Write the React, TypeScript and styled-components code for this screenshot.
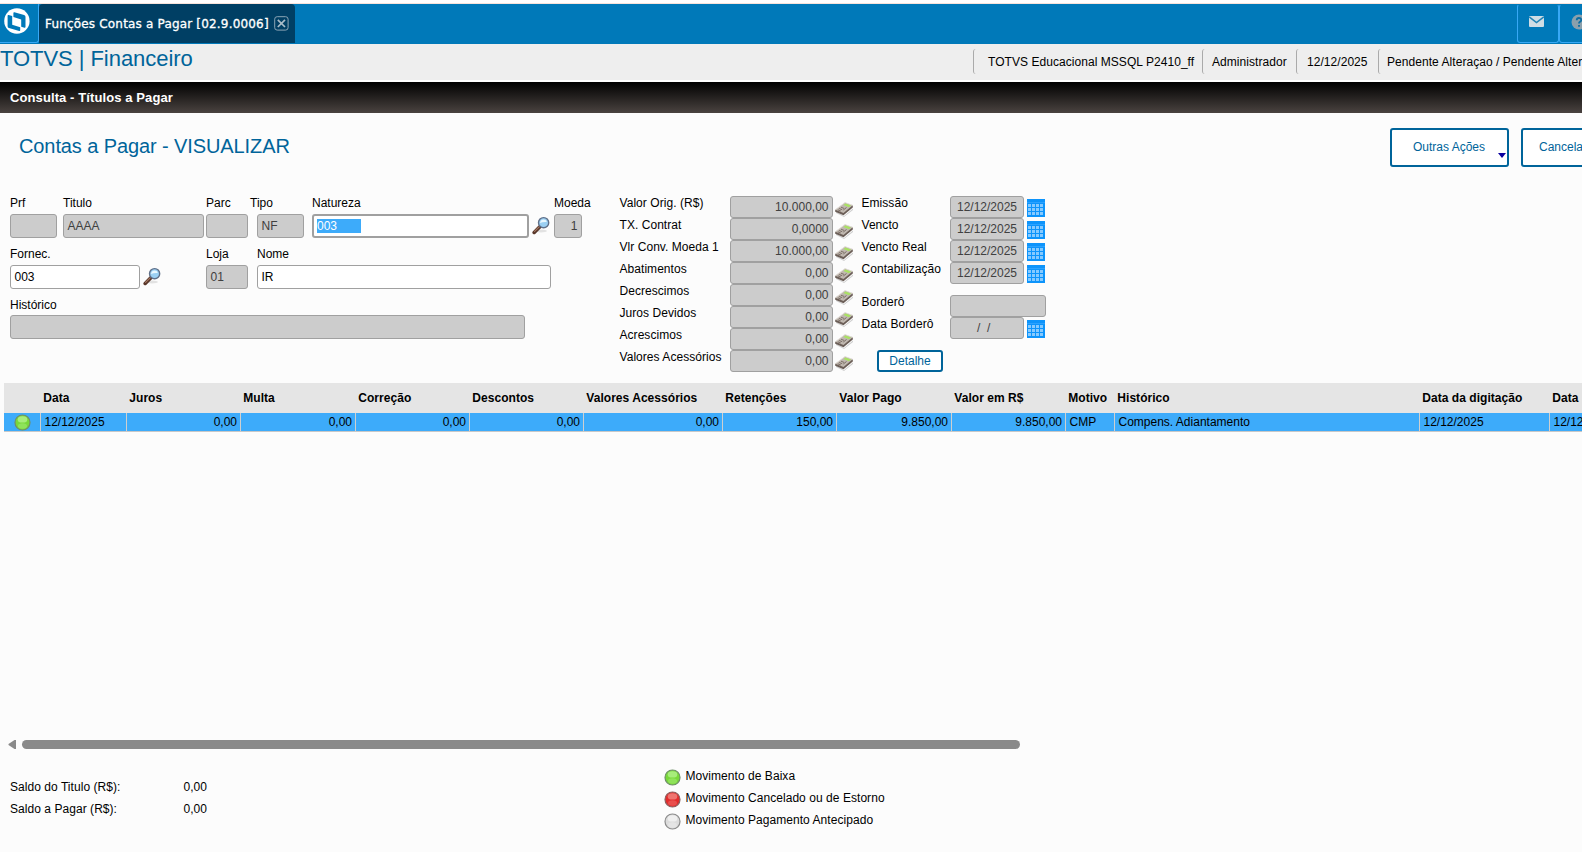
import React from "react";
import styled, { createGlobalStyle } from "styled-components";

const GlobalStyle = createGlobalStyle`
  * { box-sizing: border-box; }
  html, body { margin: 0; padding: 0; background: #fcfcfc; overflow: hidden; }
  body { font: 12px/14px "Liberation Sans", Arial, sans-serif; color: #000; }
`;

const blue = "#00649a";
const highlight = "#3dabfa";

const Screen = styled.div`
  width: 1582px;
  height: 852px;
  overflow: hidden;
  display: flex;
  flex-direction: column;
  background: #fcfcfc;
  white-space: nowrap;
`;

/* ---------- top bar ---------- */
const TopBar = styled.header`
  flex: none;
  height: 44px;
  display: flex;
  background: #0079b9;
  border-top: 3px solid #fffefe;
  box-shadow: inset 0 1px 0 #f6e3dc;
  padding-top: 1px;
`;
const LogoButton = styled.div`
  width: 39px;
  height: 39px;
  border-right: 1px solid #38a8f5;
  border-bottom: 1px solid #38a8f5;
  border-radius: 0 0 3px 0;
  padding: 4px 0 0 4px;
`;
const Tab = styled.div`
  width: 256px;
  height: 39px;
  background: #003f64;
  border-radius: 4px 4px 0 0;
  display: flex;
  align-items: center;
  padding-left: 6px;
  color: #fff;
  font: 12px/18px "DejaVu Sans", Verdana, sans-serif;
`;
const TabTitle = styled.span`
  width: 223px;
  margin-right: 6px;
  letter-spacing: 0.18px;
  -webkit-text-stroke: 0.3px #fff;
`;
const Spacer = styled.div`
  flex: 1;
`;
const BarButton = styled.div`
  flex: none;
  width: 42px;
  height: 39px;
  border: 1px solid #38a8f5;
  border-top-color: #0079b9;
  border-radius: 3px;
  padding: 9px 0 0 10px;
`;
const EdgeButton = styled(BarButton)`
  margin-right: -19px;
`;

/* ---------- module header ---------- */
const ModuleHeader = styled.div`
  flex: none;
  height: 38px;
  background: #eee;
  border-bottom: 2px solid #fff;
  display: flex;
  justify-content: space-between;
`;
const ModuleName = styled.h1`
  margin: 2px 0 0;
  font: 22px/25px "Liberation Sans", Arial, sans-serif;
  color: ${blue};
  letter-spacing: -0.05px;
`;
const Session = styled.div`
  display: flex;
  padding-top: 5px;
`;
const SessionItem = styled.div<{ $w: number; $pad: number }>`
  flex: none;
  width: ${(p) => p.$w}px;
  height: 25px;
  border-left: 1px solid #aaa;
  border-radius: 3px;
  padding: 6px 0 0 ${(p) => p.$pad}px;
  letter-spacing: 0.05px;
`;
const Caption = styled.div`
  flex: none;
  height: 31px;
  padding: 8px 0 0 10px;
  background: linear-gradient(#000, #4a4340);
  color: #fff;
  font: bold 13px/15px "Liberation Sans", Arial, sans-serif;
  letter-spacing: 0.1px;
`;

/* ---------- title and actions ---------- */
const TitleRow = styled.div`
  flex: none;
  height: 83px;
  padding: 15px 0 0 19px;
  display: flex;
`;
const Title = styled.h2`
  flex: none;
  width: 1371px;
  margin: 6px 0 0;
  font: 20px/24px "Liberation Sans", Arial, sans-serif;
  color: ${blue};
  letter-spacing: -0.1px;
`;
const ActionButton = styled.div<{ $w: number; $pad: number }>`
  flex: none;
  width: ${(p) => p.$w}px;
  height: 39px;
  margin-right: 12px;
  border: 2px solid ${blue};
  border-radius: 3px;
  padding: 10px 0 0 ${(p) => p.$pad}px;
  color: ${blue};
  background: #fff;
  display: flex;
`;
const Caret = styled.i`
  margin: 13px 0 0 12.5px;
  width: 0;
  height: 0;
  border: 4px solid transparent;
  border-top: 5px solid #0a00a0;
  border-bottom: 0;
`;

/* ---------- form ---------- */
const Form = styled.section`
  flex: none;
  height: 187px;
  display: flex;
  padding-left: 10px;
`;
const Fields = styled.div`
  width: 609px;
`;
const FieldRow = styled.div<{ $mb?: number }>`
  display: flex;
  align-items: flex-end;
  margin-bottom: ${(p) => p.$mb ?? 9}px;
`;
const Field = styled.div<{ $ml?: number }>`
  margin-left: ${(p) => p.$ml ?? 0}px;
`;
const Label = styled.div<{ $shift?: number; $gap?: number }>`
  margin: 0 -20px ${(p) => p.$gap ?? 4}px ${(p) => p.$shift ?? 0}px;
`;
const Box = styled.div<{
  $w: number;
  $h?: number;
  $enabled?: boolean;
  $focus?: boolean;
  $align?: string;
}>`
  flex: none;
  width: ${(p) => p.$w}px;
  height: ${(p) => p.$h ?? 24}px;
  display: flex;
  align-items: center;
  justify-content: ${(p) => p.$align ?? "flex-start"};
  padding: 0 ${(p) => (p.$focus ? 3 : 3.5)}px 1px;
  white-space: pre;
  border: ${(p) => (p.$focus ? 2 : 1)}px solid #a0a0a0;
  border-radius: 3px;
  background: ${(p) => (p.$enabled ? "#fff" : "#ccc")};
  color: ${(p) => (p.$enabled ? "#000" : "#404040")};
`;
const Selection = styled.span`
  width: 44px;
  background: ${highlight};
  color: #fff;
`;
const LensSlot = styled.div`
  height: 24px;
  width: 22px;
  padding: 2px 0 0 3px;
  margin-right: 3px;
`;
const Column = styled.div<{ $w: number }>`
  width: ${(p) => p.$w}px;
`;
const Line = styled.div<{ $mt?: number }>`
  height: 22px;
  display: flex;
  margin-top: ${(p) => p.$mt ?? 0}px;
`;
const LineLabel = styled.div<{ $w: number }>`
  flex: none;
  width: ${(p) => p.$w}px;
  padding-left: 0.5px;
  letter-spacing: 0.05px;
`;
const DetailButton = styled.div`
  width: 66px;
  height: 22px;
  margin: 11px 0 0 16px;
  border: 2px solid ${blue};
  border-radius: 3px;
  background: #fff;
  color: ${blue};
  text-align: center;
  line-height: 18px;
`;

/* ---------- grid ---------- */
const Table = styled.section`
  flex: none;
  height: 357px;
  margin-left: 4px;
  overflow: hidden;
`;
const gridColumns = "37px 86px 114px 115px 114px 114px 139px 114px 115px 114px 49px 305px 130px 100px";
const HeadRow = styled.div`
  display: grid;
  grid-template-columns: ${gridColumns};
  height: 30px;
  background: #e5e5e5;
  font-weight: bold;
`;
const HeadCell = styled.div`
  padding: 8px 0 0 2.3px;
  letter-spacing: 0.04px;
`;
const BodyRow = styled.div`
  display: grid;
  grid-template-columns: ${gridColumns};
  height: 19px;
  background: ${highlight};
  border-bottom: 1px solid #c8c8c8;
  overflow: hidden;
`;
const Cell = styled.div<{ $right?: boolean }>`
  height: 18px;
  border-right: 1px solid #cfcfcf;
  padding: 2px 3px 0 3.5px;
  text-align: ${(p) => (p.$right ? "right" : "left")};
`;
const DotCell = styled(Cell)`
  padding: 1px 0 0 10px;
`;
const ScrollBar = styled.div`
  flex: none;
  height: 9px;
  display: flex;
  padding-left: 8px;
`;
const Thumb = styled.div`
  width: 998px;
  height: 9px;
  margin-left: 6px;
  border-radius: 5px;
  background: #8a8a8a;
`;

/* ---------- footer ---------- */
const Footer = styled.footer`
  display: flex;
  padding-left: 10px;
`;
const Totals = styled.div`
  width: 654px;
  padding-top: 31px;
`;
const TotalLine = styled.div`
  height: 22px;
  display: flex;
  letter-spacing: 0.05px;
`;
const TotalLabel = styled.span`
  width: 173.5px;
`;
const Legend = styled.div`
  padding-top: 20px;
  letter-spacing: 0.05px;
`;
const LegendLine = styled.div`
  height: 22px;
  display: flex;
  gap: 4.5px;
`;

/* ---------- drawings ---------- */
const LogoSvg = styled.svg`
  display: block;
`;
const Logo = () => (
  <LogoSvg width="27" height="27" viewBox="0 0 27 27">
    <circle cx="12.900" cy="13" r="12.700" fill="#fff" />
    <path d="M9.400 5q0-1 1-.8l9.700 2.800q1.400.4 1.400 1.800v10.100q0 1-1 .8l-3.300-1v-7.200L9.400 9.100z" fill="#0079b9" />
    <path d="M3.600 7.800q0-1 1-.8L8.200 8.100v8.700l8 2.400v3q0 1-1 .8L5 20q-1.400-.4-1.400-1.800z" fill="#0079b9" />
  </LogoSvg>
);

const CloseIcon = () => (
  <svg width="15" height="15" viewBox="0 0 15 15">
    <rect x=".7" y=".7" width="13.400" height="13.400" rx="2.500" fill="none" stroke="#8ba5b5" />
    <path d="m3.800 3.800 7.200 7.200M11 3.800l-7.200 7.200" stroke="#a9bcc8" strokeWidth="1.700" />
  </svg>
);

const Mail = () => (
  <svg width="18" height="16" viewBox="0 0 18 16">
    <rect x="1" y="2" width="15" height="11" rx="1" fill="#cfdde5" />
    <path d="m1.200 2.800 7.300 5.700 7.300-5.700" fill="none" stroke="#2184b6" strokeWidth="1.500" />
  </svg>
);

const Help = () => (
  <svg width="18" height="16" viewBox="0 0 18 16">
    <circle cx="9" cy="8" r="7.500" fill="#8ba0ac" />
    <path d="M6.700 6.300Q6.800 4 9 4t2.300 2Q11.300 7 10 7.800 9 8.500 9 9.600M9 11v1.800" fill="none" stroke="#0b6da3" strokeWidth="1.800" />
  </svg>
);

const Lens = () => (
  <svg width="19" height="19" viewBox="0 0 19 19">
    <ellipse cx="9" cy="15" rx="6" ry="1.500" fill="#000" opacity=".1" />
    <path d="m2.200 16.400 5.600-5.600" stroke="#59372a" strokeWidth="3.600" strokeLinecap="round" />
    <path d="m2.600 15.400 4.600-4.600" stroke="#a57862" strokeWidth="1.200" strokeLinecap="round" />
    <circle cx="11.600" cy="6.700" r="5.100" fill="#9bd0f3" stroke="#607089" strokeWidth="1.400" />
    <path d="M8 7q.2-3.300 3.800-3.600 2.700.2 3 2.600Q11 5.600 8 7z" fill="#e9f8ff" />
  </svg>
);

const CalcSvg = styled.svg`
  flex: none;
  margin: 5px 0 0 1px;
`;
const Calc = () => (
  <CalcSvg width="20" height="17" viewBox="0 0 20 17">
    <path d="m2 10.500 8 4.500L19 7.500v1.500L10 16 2 12z" fill="#000" opacity=".18" />
    <path d="M1.200 8.800v2l8.300 3.400 9.300-7.800V4.300z" fill="#6b5e57" />
    <path d="M1.200 8.800 11 1.600l7.800 2.700-9.300 7.600z" fill="#c0b8b0" />
    <path d="m1.200 8.800L11 1.600l7.800 2.700" fill="none" stroke="#e2ddd7" strokeWidth=".8" />
    <path d="m9.500 4 2-1.500 5.500 1.900-2.100 1.800z" fill="#a9e262" />
    <path d="m5.200 7.500 3 1.200M7 6.200l3 1.200M3.800 8.800l3 1.200M9.300 9l3.200-2.500" stroke="#7c6f66" strokeWidth="1" />
  </CalcSvg>
);

const CalendarSvg = styled.svg`
  flex: none;
  margin: 3px 0 0 3px;
`;
const Calendar = () => (
  <CalendarSvg width="18" height="18" viewBox="0 0 18 18" shapeRendering="crispEdges">
    <path fill="#0d94fb" d="M0 0h18v18H0z" />
    <path fill="#2ba2ff" d="M0 3h18v1H0z" />
    {[1, 5, 9, 13].map((x) => (
      <path key={x} fill="#86caff" d={`M${x} 5h3v3h-3zM${x} 9h3v3h-3zM${x} 13h3v3h-3z`} />
    ))}
  </CalendarSvg>
);

const tones = {
  green: ["#79d83a", "#baf597", "#6f8f68"],
  red: ["#e32c2c", "#f4938c", "#8c6060"],
  gray: ["#dcdcdc", "#f6f6f6", "#8c8c8c"],
};
const Ball = ({ tone }: { tone: keyof typeof tones }) => {
  const [base, light, edge] = tones[tone];
  return (
    <svg width="17" height="17" viewBox="0 0 17 17">
      <circle cx="8.500" cy="8.500" r="7.500" fill={base} stroke={edge} strokeWidth="1.200" />
      <ellipse cx="8.500" cy="5.400" rx="4.800" ry="3.200" fill={light} opacity=".7" />
      <ellipse cx="8.500" cy="12" rx="4.500" ry="2.800" fill={light} opacity=".35" />
    </svg>
  );
};

/* ---------- data ---------- */
const amounts = [
  ["Valor Orig. (R$)", "10.000,00"],
  ["TX. Contrat", "0,0000"],
  ["Vlr Conv. Moeda 1", "10.000,00"],
  ["Abatimentos", "0,00"],
  ["Decrescimos", "0,00"],
  ["Juros Devidos", "0,00"],
  ["Acrescimos", "0,00"],
  ["Valores Acessórios", "0,00"],
];
const dates = ["Emissão", "Vencto", "Vencto Real", "Contabilização"];
const columns: [string, string, boolean?][] = [
  ["Data", "12/12/2025"],
  ["Juros", "0,00", true],
  ["Multa", "0,00", true],
  ["Correção", "0,00", true],
  ["Descontos", "0,00", true],
  ["Valores Acessórios", "0,00", true],
  ["Retenções", "150,00", true],
  ["Valor Pago", "9.850,00", true],
  ["Valor em R$", "9.850,00", true],
  ["Motivo", "CMP"],
  ["Histórico", "Compens. Adiantamento"],
  ["Data da digitação", "12/12/2025"],
  ["Data", "12/12/2025"],
];
const legend: [keyof typeof tones, string][] = [
  ["green", "Movimento de Baixa"],
  ["red", "Movimento Cancelado ou de Estorno"],
  ["gray", "Movimento Pagamento Antecipado"],
];

export default function App() {
  return (
    <Screen>
      <GlobalStyle />
      <TopBar>
        <LogoButton>
          <Logo />
        </LogoButton>
        <Tab>
          <TabTitle>Funções Contas a Pagar [02.9.0006]</TabTitle>
          <CloseIcon />
        </Tab>
        <Spacer />
        <BarButton>
          <Mail />
        </BarButton>
        <EdgeButton>
          <Help />
        </EdgeButton>
      </TopBar>
      <ModuleHeader>
        <ModuleName>TOTVS | Financeiro</ModuleName>
        <Session>
          <SessionItem $w={229} $pad={14}>TOTVS Educacional MSSQL P2410_ff</SessionItem>
          <SessionItem $w={94} $pad={9}>Administrador</SessionItem>
          <SessionItem $w={82} $pad={10}>12/12/2025</SessionItem>
          <SessionItem $w={204} $pad={8}>Pendente Alteraçao / Pendente Alteraçao</SessionItem>
        </Session>
      </ModuleHeader>
      <Caption>Consulta - Títulos a Pagar</Caption>
      <TitleRow>
        <Title>Contas a Pagar - VISUALIZAR</Title>
        <ActionButton $w={119} $pad={21}>
          Outras Ações
          <Caret />
        </ActionButton>
        <ActionButton $w={119} $pad={16}>Cancelar</ActionButton>
      </TitleRow>
      <Form>
        <Fields>
          <FieldRow>
            <Field>
              <Label>Prf</Label>
              <Box $w={47} />
            </Field>
            <Field $ml={6}>
              <Label>Titulo</Label>
              <Box $w={141}>AAAA</Box>
            </Field>
            <Field $ml={2}>
              <Label>Parc</Label>
              <Box $w={42} />
            </Field>
            <Field $ml={9}>
              <Label $shift={-7}>Tipo</Label>
              <Box $w={47}>NF</Box>
            </Field>
            <Field $ml={8}>
              <Label>Natureza</Label>
              <Box $w={217} $enabled $focus>
                <Selection>003</Selection>
              </Box>
            </Field>
            <LensSlot>
              <Lens />
            </LensSlot>
            <Field>
              <Label>Moeda</Label>
              <Box $w={28} $align="flex-end">1</Box>
            </Field>
          </FieldRow>
          <FieldRow>
            <Field>
              <Label>Fornec.</Label>
              <Box $w={130} $enabled>003</Box>
            </Field>
            <LensSlot>
              <Lens />
            </LensSlot>
            <Field $ml={41}>
              <Label>Loja</Label>
              <Box $w={42}>01</Box>
            </Field>
            <Field $ml={9}>
              <Label>Nome</Label>
              <Box $w={294} $enabled>IR</Box>
            </Field>
          </FieldRow>
          <Field>
            <Label $gap={3}>Histórico</Label>
            <Box $w={515} />
          </Field>
        </Fields>
        <Column $w={242}>
          {amounts.map(([label, value]) => (
            <Line key={label}>
              <LineLabel $w={111}>{label}</LineLabel>
              <Box $w={103} $h={22} $align="flex-end">{value}</Box>
              <Calc />
            </Line>
          ))}
        </Column>
        <Column $w={200}>
          {dates.map((label) => (
            <Line key={label}>
              <LineLabel $w={89}>{label}</LineLabel>
              <Box $w={74} $h={22} $align="center">12/12/2025</Box>
              <Calendar />
            </Line>
          ))}
          <Line $mt={11}>
            <LineLabel $w={89}>Borderô</LineLabel>
            <Box $w={96} $h={22} />
          </Line>
          <Line>
            <LineLabel $w={89}>Data Borderô</LineLabel>
            <Box $w={74} $h={22} $align="center">{"  /  /    "}</Box>
            <Calendar />
          </Line>
          <DetailButton>Detalhe</DetailButton>
        </Column>
      </Form>
      <Table>
        <HeadRow>
          <HeadCell />
          {columns.map(([name], i) => (
            <HeadCell key={i}>{name}</HeadCell>
          ))}
        </HeadRow>
        <BodyRow>
          <DotCell>
            <Ball tone="green" />
          </DotCell>
          {columns.map(([, value, right], i) => (
            <Cell key={i} $right={right}>{value}</Cell>
          ))}
        </BodyRow>
      </Table>
      <ScrollBar>
        <svg width="8" height="9" viewBox="0 0 8 9">
          <path d="M8 0v9H6.500L0.500 5V4l6-4z" fill="#8a8a8a" />
        </svg>
        <Thumb />
      </ScrollBar>
      <Footer>
        <Totals>
          <TotalLine>
            <TotalLabel>Saldo do Titulo (R$):</TotalLabel>
            <span>0,00</span>
          </TotalLine>
          <TotalLine>
            <TotalLabel>Saldo a Pagar (R$):</TotalLabel>
            <span>0,00</span>
          </TotalLine>
        </Totals>
        <Legend>
          {legend.map(([tone, text]) => (
            <LegendLine key={text}>
              <Ball tone={tone} />
              <span>{text}</span>
            </LegendLine>
          ))}
        </Legend>
      </Footer>
    </Screen>
  );
}
